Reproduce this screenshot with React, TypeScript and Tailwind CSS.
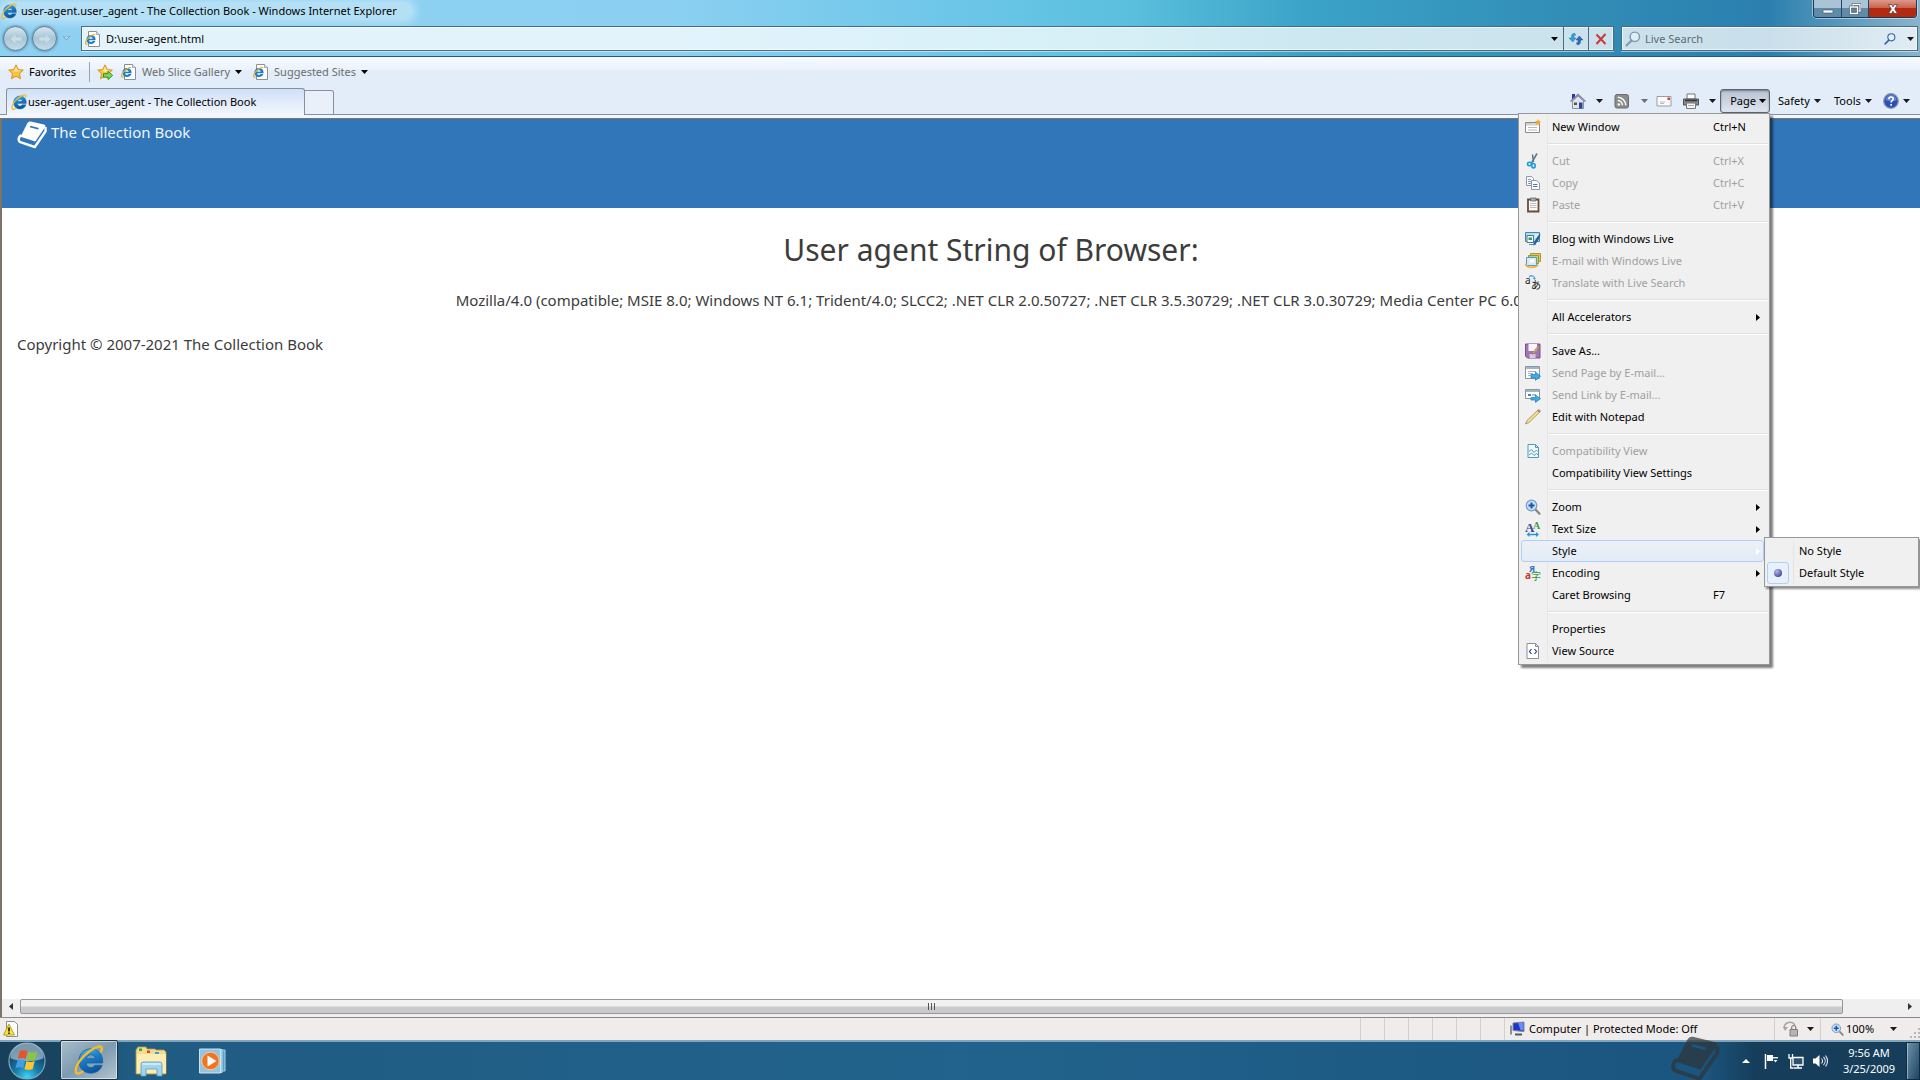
import type { ReactNode } from 'react';

function Caret({ className = 'fill-[#1a1a1a]' }: { className?: string }) {
  return (
    <svg viewBox="0 0 7 4" className={`h-1 w-[7px] shrink-0 ${className}`}>
      <path d="M0 0h7L3.5 4z" />
    </svg>
  );
}

function IeLogo({ className = 'size-4' }: { className?: string }) {
  return (
    <svg viewBox="0 0 16 16" className={`shrink-0 ${className}`}>
      <defs>
        <linearGradient id="ieBlue" x1="0" y1="0" x2="0.4" y2="1">
          <stop offset="0" stopColor="#4cb8ec" />
          <stop offset="0.55" stopColor="#1678c6" />
          <stop offset="1" stopColor="#0d569e" />
        </linearGradient>
      </defs>
      <path
        fill="url(#ieBlue)"
        stroke="#14609f"
        strokeWidth="0.4"
        d="M9 2C5.300 2 2.600 4.700 2.600 8.500S5.200 15 9 15c2.900 0 5.200-1.500 6-4.200h-4c-.4.800-1 1.200-2 1.200-1.500 0-2.400-.9-2.500-2.400h8.800C15.600 5.200 13 2 9 2zM6.600 7.300C6.800 6 7.700 5.200 9 5.200s2.200.8 2.300 2.100z"
      />
      <path
        fill="none"
        stroke="#f2bb2c"
        strokeWidth="1.3"
        strokeLinecap="round"
        d="M4.500 14.200C2.400 15.700.9 15.700.9 13.600.9 11 3.900 6.500 7.900 3.600c3.200-2.400 6.100-3.400 6.800-2.300.3.500.2 1.300-.3 2.200"
      />
    </svg>
  );
}

function IePage() {
  return (
    <svg viewBox="0 0 16 16" className="size-4 shrink-0">
      <path d="M3.500.5h8l3 3v12h-11z" fill="#fdfdfd" stroke="#8b8f96" />
      <path d="M11.500.5v3h3" fill="#e4e7ea" stroke="#8b8f96" strokeWidth="0.7" />
      <path
        fill="#1c7dc9"
        d="M6 3.900c-2.700 0-4.600 1.900-4.600 4.600s1.900 4.600 4.600 4.600c2.100 0 3.700-1.100 4.400-3H7.600c-.3.600-.8.900-1.600.9-1.100 0-1.800-.7-1.900-1.700h6.500C10.800 6.200 9 3.900 6 3.900zM4.200 7.700c.2-.9.800-1.400 1.800-1.400s1.500.5 1.600 1.400z"
      />
      <path
        fill="none"
        stroke="#eab02a"
        strokeWidth="1.100"
        d="M2.500 12.700c-1.200.8-2 .5-2-.5.100-1.800 2.200-4.900 4.900-6.900 2.200-1.600 4.400-2.300 4.900-1.500"
      />
    </svg>
  );
}

function Star({ add = false }: { add?: boolean }) {
  return (
    <svg viewBox="0 0 16 16" className="size-4 shrink-0">
      <path
        d="M8 .8l2.200 4.700 5.100.6-3.800 3.500 1 5.100L8 12.200l-4.500 2.500 1-5.100L.7 6.100l5.100-.6z"
        fill="#fcc23c"
        stroke="#d98a13"
        strokeWidth="0.9"
        strokeLinejoin="round"
      />
      <path d="M8 2.500L9.500 6l3.500.5-3 .8-2 1-3-1.500 1.500-.8z" fill="#fee9a0" />
      {add && (
        <path d="M6.500 9.700h4.500V7.300l4.700 4.100-4.700 4.100v-2.300H6.500z" fill="#7ed957" stroke="#2a8a22" strokeWidth="0.9" />
      )}
    </svg>
  );
}

function Magnifier({ className = 'size-4', ring = '#2a6db5' }: { className?: string; ring?: string }) {
  return (
    <svg viewBox="0 0 16 16" className={`shrink-0 ${className}`}>
      <path d="M6.500 9.500L1.500 14.500" stroke={ring} strokeWidth="2" strokeLinecap="round" />
      <circle cx="9.800" cy="5.800" r="4.700" fill="#e4f3fb" fillOpacity="0.7" stroke={ring} strokeWidth="1.4" />
    </svg>
  );
}

function ZoomIcon({ className = 'size-4' }: { className?: string }) {
  return (
    <svg viewBox="0 0 16 16" className={`shrink-0 ${className}`}>
      <path d="M10 10l4.500 4.700" stroke="#8d8577" strokeWidth="2.2" strokeLinecap="round" />
      <circle cx="6.500" cy="6.500" r="5.300" fill="#c5e2f8" stroke="#7a9cc0" strokeWidth="1.2" />
      <path d="M6.500 3.500v6M3.500 6.500h6" stroke="#1b53ae" strokeWidth="2" />
    </svg>
  );
}

function BookLogo({ className }: { className: string }) {
  return (
    <svg viewBox="0 0 30 28" className={`shrink-0 ${className}`}>
      <path
        fill="currentColor"
        fillRule="evenodd"
        d="M10.500 2Q11.500 0 13.700.5L27 3.600Q29.200 4.200 28 6.200L18.300 20.600 3.500 15.700zM13.500 4.800l-.9 1.500 8.400 2.200.9-1.500z"
      />
      <path
        fill="none"
        stroke="currentColor"
        strokeWidth="2.400"
        strokeLinejoin="round"
        d="M4.500 14.500C1.200 15.500.8 20 3.300 21.200L17.800 26 28.600 10.200 28.500 6"
      />
    </svg>
  );
}

/* Page menu icons */

const icons: Record<string, ReactNode> = {
  window: (
    <>
      <path d="M.5 3.500h14v10H.5z" fill="#fff" stroke="#8c8c8c" />
      <path d="M1 4h13v2.500H1z" fill="#d5d0c8" />
      <path d="M3 8.500h9M3 11h9" stroke="#b9b9b9" />
      <path d="M13 0l1 2 2 .2-1.500 1.500.5 2.300-2-1.200L11 6l.5-2.300L10 2.200l2-.2z" fill="#f7a823" />
    </>
  ),
  cut: (
    <>
      <path d="M12 .5L6.500 10M7.500 1.500L8.500 9" stroke="#5c7690" strokeWidth="1.500" />
      <ellipse cx="4.500" cy="11" rx="2" ry="1.700" fill="none" stroke="#1e9ce0" strokeWidth="1.600" />
      <ellipse cx="8.500" cy="12.700" rx="1.700" ry="2.200" fill="none" stroke="#1e9ce0" strokeWidth="1.600" />
    </>
  ),
  copy: (
    <g stroke="#8f98a8">
      <path d="M1.500 1.500h5l2 2v7h-7z" fill="#fff" />
      <path d="M3 4.500h3M3 6.500h4M3 8.500h3" stroke="#7d9ccb" />
      <path d="M6.500 5.500h5l3 2.500v6.500h-8z" fill="#fff" />
      <path d="M8 9.500h4.500M8 11.500h4.500" stroke="#5678b8" />
    </g>
  ),
  paste: (
    <>
      <path d="M3 2.500h10.500V14.500H3z" fill="#fdfdfb" stroke="#6a4b35" strokeWidth="1.800" />
      <path d="M5.500 1h5.500v3H5.500z" fill="#a9a9a9" stroke="#5d5d5d" strokeWidth="0.7" />
      <path d="M5 6.500h6.500M5 8.500h6.500M5 10.500h6.500" stroke="#b8bcc0" />
    </>
  ),
  blog: (
    <>
      <path d="M.5 1.500h14v9H.5z" fill="#b5dcef" stroke="#3f89ad" />
      <path d="M2 4.500h6.500v7H2z" fill="#f4fbff" stroke="#47799c" />
      <path d="M3.500 6.500h3.500v2.500H3.500z" fill="#3b9a4b" />
      <path d="M9.500 4h4M9.500 6h3" stroke="#fff" />
      <path d="M15.500 2.500c-.6 5-2.600 8-6 11.500l-1.500.5.300-1.800C10.500 9 12 5.500 15.500 2.500z" fill="#255d9e" />
      <path d="M4 13.500h7" stroke="#4b8db8" />
    </>
  ),
  email: (
    <>
      <path d="M5.500.5h10v8h-10z" fill="#f3c553" stroke="#b9912c" />
      <path d="M3.500 2.500h10v8h-10z" fill="#b8d66c" stroke="#7da03a" />
      <path d="M1.500 4.500h10v8h-10z" fill="#d5ebfa" stroke="#5c95c7" />
      <path d="M5 6.500h4v3H5z" fill="#fff" />
      <path d="M.5 11c1 4 8 4.500 13 1" fill="none" stroke="#f0b03a" strokeWidth="1.700" />
    </>
  ),
  translate: (
    <>
      <text x="0" y="9" fontSize="10" fill="#222">a</text>
      <text x="6" y="14" fontSize="10" fill="#111" fontFamily="Noto Sans CJK JP">あ</text>
      <path d="M4 2c2-2 5-1.500 5.500 1" fill="none" stroke="#59a7dc" strokeWidth="1.300" />
      <path d="M7.500 3h4l-2 2z" fill="#59a7dc" />
    </>
  ),
  save: (
    <>
      <path d="M.5 1h14.500v14H2.500l-2-2z" fill="#a074b8" stroke="#76508f" />
      <path d="M3.500 1h8.500v7H3.500z" fill="#fbf6fc" />
      <path d="M4.500 11h6v4h-6z" fill="#d8c7e2" />
      <path d="M14.500 3.500l-5.500 7-1.500 1 .3-2L13 3z" fill="#e9b85b" stroke="#8f6a36" strokeWidth="0.6" />
    </>
  ),
  sendPage: (
    <>
      <path d="M.5 1.500h14v12H.5z" fill="#fff" stroke="#8497a8" />
      <path d="M1 2h13v2H1z" fill="#a5b4c0" />
      <path d="M3 6.500h8M3 8.500h5M3 10.500h4" stroke="#a8b4be" />
      <path d="M6 9.500h4.500V7l5 4.200-5 4.200V13H6z" fill="#3fabe8" stroke="#1c79b7" strokeWidth="0.7" />
    </>
  ),
  sendLink: (
    <>
      <path d="M.5 2.500h14v9H.5z" fill="#fff" stroke="#8497a8" />
      <path d="M1 3h13v2H1z" fill="#a5b4c0" />
      <path d="M3 7h3v2H3z" fill="#4c80c0" />
      <path d="M7 8h4" stroke="#4c80c0" />
      <path d="M6 10.500h4.500V8l5 3.700-5 3.700V13H6z" fill="#3fabe8" stroke="#1c79b7" strokeWidth="0.7" />
    </>
  ),
  pencil: (
    <>
      <path d="M.5 15l1.500-3.500L12.500 1.500l2 1.700L4 13.500z" fill="#f2df8f" stroke="#9a8a50" strokeWidth="0.8" />
      <path d="M12.500 1.500L13.800.5l1.700 1.500-1 1.200z" fill="#b5a18a" stroke="#7d6a55" strokeWidth="0.6" />
    </>
  ),
  compat: (
    <>
      <path d="M3 1.500h7.500l3 3v10H3z" fill="#f2fafd" stroke="#4b9cbc" />
      <path d="M10.500 1.500v3h3" fill="none" stroke="#4b9cbc" />
      <path d="M4 8.500l2.500-2 2.500 3 2.500-2.500 1.500 1.500M4 12l2.500-2 2.500 2.500 2.500-2 1.500 1.500" fill="none" stroke="#4b9cbc" />
    </>
  ),
  textSize: (
    <>
      <text x="0" y="11" fontSize="13" fontFamily="Liberation Serif" fontWeight="700" fill="#37499b">A</text>
      <text x="8" y="8" fontSize="10" fontFamily="Liberation Serif" fontWeight="700" fill="#3d9a49">A</text>
      <path d="M3 13.500h9" stroke="#2697dc" strokeWidth="1.500" />
      <path d="M1.500 13.500l3-2.500v5zM14 13.500l-3-2.500v5z" fill="#2697dc" />
    </>
  ),
  encoding: (
    <>
      <text x="4" y="7" fontSize="9" fontWeight="700" fill="#3573c8">Я</text>
      <text x="0" y="14" fontSize="10" fontWeight="700" fill="#c33a2c">a</text>
      <text x="6" y="15" fontSize="10" fill="#2f9940" fontFamily="Noto Sans CJK JP">字</text>
    </>
  ),
  source: (
    <>
      <path d="M2 .5h8.500l3 3v12H2z" fill="#fff" stroke="#8b8f96" />
      <path d="M10.500.5v3h3" fill="none" stroke="#8b8f96" />
      <path d="M6.500 6L4.500 8.500l2 2.500M9.500 6l2 2.500-2 2.500" fill="none" stroke="#2b3f8f" strokeWidth="1.200" />
    </>
  ),
};

interface MenuEntry {
  label: string;
  icon?: string;
  shortcut?: string;
  disabled?: boolean;
  submenu?: boolean;
}

const menuGroups: MenuEntry[][] = [
  [{ label: 'New Window', icon: 'window', shortcut: 'Ctrl+N' }],
  [
    { label: 'Cut', icon: 'cut', shortcut: 'Ctrl+X', disabled: true },
    { label: 'Copy', icon: 'copy', shortcut: 'Ctrl+C', disabled: true },
    { label: 'Paste', icon: 'paste', shortcut: 'Ctrl+V', disabled: true },
  ],
  [
    { label: 'Blog with Windows Live', icon: 'blog' },
    { label: 'E-mail with Windows Live', icon: 'email', disabled: true },
    { label: 'Translate with Live Search', icon: 'translate', disabled: true },
  ],
  [{ label: 'All Accelerators', submenu: true }],
  [
    { label: 'Save As...', icon: 'save' },
    { label: 'Send Page by E-mail...', icon: 'sendPage', disabled: true },
    { label: 'Send Link by E-mail...', icon: 'sendLink', disabled: true },
    { label: 'Edit with Notepad', icon: 'pencil' },
  ],
  [
    { label: 'Compatibility View', icon: 'compat', disabled: true },
    { label: 'Compatibility View Settings' },
  ],
  [
    { label: 'Zoom', icon: 'zoom', submenu: true },
    { label: 'Text Size', icon: 'textSize', submenu: true },
    { label: 'Style', submenu: true },
    { label: 'Encoding', icon: 'encoding', submenu: true },
    { label: 'Caret Browsing', shortcut: 'F7' },
  ],
  [{ label: 'Properties' }, { label: 'View Source', icon: 'source' }],
];

function StyleSubmenu() {
  return (
    <div className="absolute -top-[3px] left-full z-20 w-[155px] border border-[#979797] bg-[#f0f0f0] p-0.5 shadow-[2px_2px_2px_rgba(0,0,0,0.45)]">
      <div className="bg-linear-to-r from-transparent from-[26px] via-[#d9d9d9] via-[26px] to-transparent to-[27px]">
        {['No Style', 'Default Style'].map((name) => (
          <label key={name} className="flex h-[22px] items-center gap-[10px]">
            <span className="flex size-[22px] items-center justify-center rounded-[3px] border border-transparent has-checked:border-[#aecff7] has-checked:bg-[#e8f0f9]">
              <input
                type="radio"
                name="style"
                defaultChecked={name === 'Default Style'}
                className="size-2 appearance-none rounded-full checked:bg-radial-[at_35%_30%] checked:from-[#b4b8ec] checked:to-[#26267c]"
              />
            </span>
            {name}
          </label>
        ))}
      </div>
    </div>
  );
}

function MenuRow({ item }: { item: MenuEntry }) {
  const open = item.label === 'Style';
  return (
    <div className="relative mr-1">
      <button
        role="menuitem"
        disabled={item.disabled}
        className={`flex h-[22px] w-full items-center rounded-[3px] border pl-[3px] text-left ${
          open ? 'border-[#aecff7] bg-linear-to-b from-[#edf1f7] to-[#e2ebf6]' : 'border-transparent'
        } ${item.disabled ? 'text-[#a0a0a0]' : 'text-black'}`}
      >
        <span className="mr-[11px] size-4">
          {item.icon === 'zoom' && <ZoomIcon />}
          {item.icon && item.icon !== 'zoom' && (
            <svg viewBox="0 0 16 16" className="size-4 overflow-visible">{icons[item.icon]}</svg>
          )}
        </span>
        <span className="flex-1 whitespace-nowrap">{item.label}</span>
        {item.shortcut && <span className="w-[50px]">{item.shortcut}</span>}
        {item.submenu && (
          <svg viewBox="0 0 4 7" className={`mr-[3px] h-[7px] w-1 ${open ? 'fill-white' : 'fill-black'}`}>
            <path d="M0 0v7l4-3.500z" />
          </svg>
        )}
      </button>
      {open && <StyleSubmenu />}
    </div>
  );
}

function PageMenu() {
  return (
    <div
      role="menu"
      className="absolute top-full right-0 z-10 w-[252px] border border-[#979797] bg-[#f0f0f0] p-0.5 pr-px text-left shadow-[3px_3px_2px_rgba(0,0,0,0.5)]"
    >
      <div className="bg-linear-to-r from-transparent from-[26px] via-[#dcdcdc] via-[26px] to-transparent to-[27px]">
        {menuGroups.map((group, i) => (
          <div key={i}>
            {i > 0 && <hr className="my-[5px] ml-[27px] h-0.5 border-t border-b border-t-[#e0e0e0] border-b-white" />}
            {group.map((item) => (
              <MenuRow key={item.label} item={item} />
            ))}
          </div>
        ))}
      </div>
    </div>
  );
}

function TitleBar() {
  return (
    <div className="flex h-[25px] items-start justify-between">
      <div className="mt-0.5 flex h-[18px] items-center gap-1 rounded-full bg-white/35 pr-4 pl-px shadow-[0_0_8px_4px_rgba(255,255,255,0.35)]">
        <IeLogo />
        <h1 className="whitespace-nowrap">user-agent.user_agent - The Collection Book - Windows Internet Explorer</h1>
      </div>
      <div className="mr-[3px] flex h-[18px] overflow-hidden rounded-b-[4px] border border-t-0 border-[#1c3a55] shadow-[0_0_0_1px_rgba(255,255,255,0.45)]">
        <button
          aria-label="Minimize"
          className="flex w-7 items-center justify-center border-r border-[#24455f] bg-linear-to-b from-[#a9c4d6] from-45% to-[#5f8ba9] to-50%"
        >
          <svg viewBox="0 0 12 12" className="size-3">
            <path d="M1 7h10v3H1z" fill="#fff" stroke="#4c5d6b" strokeWidth="0.7" />
          </svg>
        </button>
        <button
          aria-label="Restore"
          className="flex w-[27px] items-center justify-center border-r border-[#24455f] bg-linear-to-b from-[#a9c4d6] from-45% to-[#5f8ba9] to-50%"
        >
          <svg viewBox="0 0 12 12" className="size-3">
            <path d="M4 1.500h7v6.500H4z" fill="none" stroke="#37485a" strokeWidth="2.400" />
            <path d="M4 1.500h7v6.500H4z" fill="none" stroke="#fff" strokeWidth="1.300" />
            <path d="M1.500 4h7v6.500h-7z" fill="#6a7f92" stroke="#37485a" strokeWidth="2.400" />
            <path d="M1.500 4h7v6.500h-7z" fill="none" stroke="#fff" strokeWidth="1.500" />
          </svg>
        </button>
        <button
          aria-label="Close"
          className="flex w-[47px] items-center justify-center bg-linear-to-b from-[#dc9a8c] from-0% via-[#c8634f] via-45% to-[#b32a10] to-50%"
        >
          <svg viewBox="0 0 12 12" className="size-3">
            <path d="M1.500 1.500h3L6 3.800l1.500-2.300h3L7.700 6l2.800 4.500h-3L6 8.200l-1.500 2.300h-3L4.300 6z" fill="#fff" stroke="#5a3a3a" strokeWidth="0.8" />
          </svg>
        </button>
      </div>
    </div>
  );
}

function NavBar() {
  return (
    <div className="flex h-[31px] items-start pt-px pr-0.5 pl-[3px]">
      <div className="flex items-center gap-1">
        {['Back', 'Forward'].map((name) => (
          <button
            key={name}
            aria-label={name}
            className="flex size-[25px] items-center justify-center rounded-full border border-[#5d7b90] bg-linear-to-b from-[#d5e6ef] via-[#a9c6d6] to-[#c3dde8] shadow-[0_0_3px_rgba(40,70,100,0.7)]"
          >
            <svg viewBox="0 0 16 16" className={`size-4 ${name === 'Forward' ? 'rotate-180' : ''}`}>
              <path d="M2 8l6-5.500V6h6v4H8v3.500z" fill="#c9dde8" stroke="#a9c4d2" strokeWidth="0.6" />
            </svg>
          </button>
        ))}
      </div>
      <button aria-label="Recent pages" className="mt-2.5 ml-1.5 flex">
        <Caret className="fill-[#b9dcec] stroke-[#6f9fb8]" />
      </button>
      <div className="ml-[11px] flex h-[25px] flex-1 items-stretch border border-[#4a6c83] bg-white/75 shadow-[inset_0_0_0_1px_rgba(255,255,255,0.6),0_1px_0_rgba(255,255,255,0.5)]">
        <div className="flex flex-1 items-center gap-[5px] pl-[3px]">
          <IePage />
          <input aria-label="Address" defaultValue="D:\user-agent.html" className="min-w-0 flex-1 bg-transparent outline-none" />
          <button aria-label="Show address list" className="mr-[5px]">
            <Caret className="fill-black" />
          </button>
        </div>
        <button aria-label="Refresh" className="flex w-[25px] items-center justify-center border-l border-[#4a6c83]">
          <svg viewBox="0 0 16 16" className="size-4">
            <path d="M7 2.500C5 2 3.500 3 3.500 5.500V7H1l3.700 4L8 7H6V5.500C6 4.500 6.500 4 7.500 4.300z" fill="#3d9bd3" stroke="#2375ad" strokeWidth="0.5" />
            <path d="M9 13.500c2 .5 3.500-.5 3.500-3V9H15l-3.700-4L8 9h2v1.500c0 1-.5 1.500-1.500 1.200z" fill="#2f6cc0" stroke="#1d4c95" strokeWidth="0.5" />
          </svg>
        </button>
        <button aria-label="Stop" className="flex w-[25px] items-center justify-center border-l border-[#4a6c83]">
          <svg viewBox="0 0 12 12" className="size-3">
            <path d="M1.500 1.500l9 9.500M10.500 1L1.500 11" stroke="#c9383b" strokeWidth="2" />
          </svg>
        </button>
      </div>
      <div className="ml-[7px] flex h-[25px] w-[297px] items-center border border-[#4a6c83] bg-white/75 pr-[3px] pl-[3px] shadow-[inset_0_0_0_1px_rgba(255,255,255,0.6),0_1px_0_rgba(255,255,255,0.5)]">
        <Magnifier ring="#7f97a8" />
        <input
          type="search"
          aria-label="Live Search"
          placeholder="Live Search"
          className="ml-1 min-w-0 flex-1 bg-transparent outline-none placeholder:text-[#5c6a72]"
        />
        <button aria-label="Search">
          <Magnifier className="size-3" ring="#2a63a8" />
        </button>
        <button aria-label="Search options" className="ml-[11px]">
          <Caret />
        </button>
      </div>
    </div>
  );
}

function FavoritesBar() {
  return (
    <div className="flex h-[30px] items-center pl-2">
      <button className="flex items-center gap-[5px]">
        <Star />
        Favorites
      </button>
      <div className="mr-[7px] ml-[13px] h-5 w-px bg-[#9aa3b0]" />
      <button aria-label="Add to Favorites Bar">
        <Star add />
      </button>
      <button className="ml-2 flex items-center text-[#6d6d6d]">
        <IePage />
        <span className="mr-[5px] ml-[5px]">Web Slice Gallery</span>
        <Caret className="fill-black" />
      </button>
      <button className="ml-[11px] flex items-center text-[#6d6d6d]">
        <IePage />
        <span className="mr-[5px] ml-[5px]">Suggested Sites</span>
        <Caret className="fill-black" />
      </button>
    </div>
  );
}

function CommandBar() {
  return (
    <div className="flex items-center self-start pt-0.5">
      <button aria-label="Home">
        <svg viewBox="0 0 16 16" className="size-4">
          <path d="M2 1h3v5H2z" fill="#2a35b0" />
          <path d="M2.500 8L8 3l5.500 5v7.500h-11z" fill="#e3e3ea" stroke="#777b8c" strokeWidth="0.8" />
          <path d="M.5 8.500L8 1.500l7.500 7" fill="none" stroke="#7d84a8" strokeWidth="1.500" />
          <path d="M9 9.500h3.500v6H9z" fill="#27459b" />
          <path d="M4 9.500h3v2.500H4z" fill="#4d5468" />
        </svg>
      </button>
      <button aria-label="Home options" className="ml-2.5"><Caret /></button>
      <button aria-label="Feeds" className="ml-[11px]">
        <svg viewBox="0 0 16 16" className="size-4">
          <rect x="1" y="1.500" width="13.500" height="13.500" rx="2" fill="#8b8b8b" stroke="#6b6b6b" />
          <circle cx="4.800" cy="11.500" r="1.300" fill="#fff" />
          <path d="M3.800 7.500a5 5 0 0 1 4.700 4.800M3.800 4.200a8.300 8.300 0 0 1 8 8.100" fill="none" stroke="#fff" strokeWidth="1.500" />
        </svg>
      </button>
      <button aria-label="Feed options" className="ml-[11px]"><Caret className="fill-[#6d6d6d]" /></button>
      <button aria-label="Read mail" className="ml-2">
        <svg viewBox="0 0 16 16" className="size-4">
          <path d="M1 3.500h14v9.500H1z" fill="#fafafa" stroke="#9c9c9c" />
          <path d="M11.500 4.500h2.500V7h-2.500z" fill="#cc3a32" />
          <path d="M4 9h5M4 10.500h4" stroke="#bdbdbd" />
        </svg>
      </button>
      <button aria-label="Print" className="ml-[11px]">
        <svg viewBox="0 0 16 16" className="size-4">
          <path d="M4 1h8v5H4z" fill="#fff" stroke="#777" />
          <path d="M.5 6h15v6H.5z" fill="#86898c" stroke="#4e5255" />
          <path d="M2 7.500h12" stroke="#35383a" strokeWidth="1.500" />
          <path d="M3.500 10h9v5.500h-9z" fill="#f4f4f4" stroke="#777" />
          <path d="M5 12.500h6" stroke="#aaa" />
        </svg>
      </button>
      <button aria-label="Print options" className="ml-2.5"><Caret /></button>
      <div className="relative ml-1">
        <button
          aria-haspopup="menu"
          aria-expanded="true"
          className="flex h-6 w-[50px] items-center justify-end gap-[3px] rounded-[3px] border border-[#5b6470] bg-linear-to-b from-[#b9c2d2] to-[#dfe5f0] pr-[3px] shadow-[inset_0_1px_2px_rgba(60,70,90,0.6)]"
        >
          Page
          <Caret className="fill-black" />
        </button>
        <PageMenu />
      </div>
      <button className="ml-2 flex w-14 items-center gap-1">
        Safety <Caret />
      </button>
      <button className="flex w-[49px] items-center gap-1">
        Tools <Caret />
      </button>
      <button aria-label="Help" className="flex items-center gap-1">
        <svg viewBox="0 0 16 16" className="size-4">
          <circle cx="8" cy="8" r="7.300" fill="#2c4fb5" stroke="#8b95ab" strokeWidth="1.300" />
          <path d="M2.500 7a5.500 5 0 0 1 11 0c-3 1.500-8 1.500-11 0z" fill="#86a3e6" fillOpacity="0.6" />
          <path d="M5.800 6.300c0-3 4.500-3 4.500-.3 0 1.700-2.200 1.700-2.200 3.500M8.100 11v1.700" fill="none" stroke="#fff" strokeWidth="1.600" />
        </svg>
        <Caret />
      </button>
    </div>
  );
}

function TabRow() {
  return (
    <div className="flex h-7 items-end justify-between border-b border-[#8591a2] pr-2.5 pl-1.5">
      <div className="-mb-px flex items-end">
        <div className="flex h-[27px] w-[299px] items-center rounded-t-[3px] border border-b-0 border-[#8591a2] bg-linear-to-b from-[#cfe0f7] to-[#f3f7fd] pl-1">
          <IeLogo />
          <span className="ml-px whitespace-nowrap">user-agent.user_agent - The Collection Book</span>
        </div>
        <button aria-label="New Tab" className="h-[25px] w-[29px] rounded-tr-[3px] border border-l-0 border-[#8591a2] bg-[#e9f0fa]" />
      </div>
      <CommandBar />
    </div>
  );
}

function WebPage() {
  return (
    <main className="flex-1 overflow-hidden border-t border-l-2 border-[#7c7468] bg-white text-[15px] text-[#3c3c3c]">
      {/* the document is a little wider than the window */}
      <div className="w-[calc(100%+60px)]">
        <header className="flex h-[89px] bg-[#3076b9] pl-[15px] text-[#eef4fa]">
          <BookLogo className="mt-0.5 h-7 w-[30px] text-white" />
          <span className="mt-px ml-1 leading-6">The Collection Book</span>
        </header>
        <h2 className="mt-6 text-center text-[30px] leading-9">User agent String of Browser:</h2>
        <p className="mt-5 text-center leading-6 whitespace-nowrap">
          Mozilla/4.0 (compatible; MSIE 8.0; Windows NT 6.1; Trident/4.0; SLCC2; .NET CLR 2.0.50727; .NET CLR 3.5.30729;
          .NET CLR 3.0.30729; Media Center PC 6.0)
        </p>
        <footer className="mt-5 pl-[15px] leading-6">Copyright © 2007-2021 The Collection Book</footer>
      </div>
    </main>
  );
}

function HorizontalScrollbar() {
  return (
    <div className="flex h-[18px] items-center border-l-2 border-[#7c7468] bg-[#efefef] pb-[3px]">
      <button aria-label="Scroll left" className="flex w-[18px] justify-center">
        <svg viewBox="0 0 4 7" className="h-[7px] w-1 fill-[#333]"><path d="M4 0v7L0 3.500z" /></svg>
      </button>
      <div className="flex-1">
        <div className="flex h-[15px] w-[97%] items-center justify-center gap-[2px] rounded-[2px] border border-[#979797] bg-linear-to-b from-[#f1f1f1] from-45% to-[#c9cacc] to-55%">
          <span className="h-[7px] w-px bg-[#555]" />
          <span className="h-[7px] w-px bg-[#555]" />
          <span className="h-[7px] w-px bg-[#555]" />
        </div>
      </div>
      <button aria-label="Scroll right" className="flex w-[21px] justify-center">
        <svg viewBox="0 0 4 7" className="h-[7px] w-1 fill-[#333]"><path d="M0 0v7l4-3.500z" /></svg>
      </button>
    </div>
  );
}

function StatusBar() {
  return (
    <footer className="flex h-[23px] items-stretch border-t border-[#8a8a8a] bg-[#f0eceb] text-black">
      <div className="flex flex-1 items-center pl-[3px]">
        <svg viewBox="0 0 16 16" className="size-4">
          <path d="M3.500.5h8l3 3v12h-11z" fill="#fdfdfd" stroke="#8b8f96" />
          <path d="M6 3L11.500 14H.5z" fill="#f8e23c" stroke="#b29a14" strokeWidth="0.9" strokeLinejoin="round" />
          <path d="M6 6.500v4M6 11.500v1.500" stroke="#111" strokeWidth="1.500" />
        </svg>
      </div>
      {[0, 1, 2, 3, 4, 5].map((n) => (
        <div key={n} className="w-6 border-l border-[#d3cfce]" />
      ))}
      <div className="flex w-[270px] items-center gap-1 border-l border-[#d3cfce] pl-1">
        <svg viewBox="0 0 16 16" className="size-4">
          <path d="M4 2l11-1v9.500l-11-1z" fill="#1d36c8" stroke="#7f8899" />
          <path d="M9 1.800l5.500-.4v8l-3-.3z" fill="#6f8bf2" />
          <path d="M1 4.500h2v9H1z" fill="#8a8f98" />
          <path d="M6 12.500h7v2H6z" fill="#555b66" />
        </svg>
        <span className="whitespace-nowrap">Computer | Protected Mode: Off</span>
      </div>
      <button aria-label="InPrivate Filtering" className="flex w-[46px] items-center gap-2 border-l border-[#d3cfce] pl-2">
        <svg viewBox="0 0 16 16" className="size-4">
          <path d="M1 7a6 6 0 0 1 11-3" fill="none" stroke="#a5a5a5" strokeWidth="1.500" />
          <path d="M0 6h5L2 10z" fill="#a5a5a5" />
          <path d="M7 8.500h7.500v6.500H7z" fill="#b5b5b5" stroke="#7d7d7d" />
          <path d="M8.700 8V6.500a2 2 0 0 1 4 0V8" fill="none" stroke="#7d7d7d" strokeWidth="1.200" />
        </svg>
        <Caret />
      </button>
      <button className="flex w-[100px] items-center border-l border-[#d3cfce] pl-2.5">
        <ZoomIcon className="size-[13px]" />
        <span className="ml-0.5 w-11 text-left">100%</span>
        <Caret />
        <svg viewBox="0 0 10 10" className="mt-2 ml-auto size-2.5 fill-[#b9b5b3]">
          <path d="M8 0h2v2H8zM8 4h2v2H8zM4 4h2v2H4zM8 8h2v2H8zM4 8h2v2H4zM0 8h2v2H0z" />
        </svg>
      </button>
    </footer>
  );
}

function Taskbar() {
  return (
    <div className="relative flex h-10 items-stretch border-t-2 border-t-[#7fa6bd] bg-[linear-gradient(to_right,#183f5a_0px,#19445f_56px,#205b82_130px,#21638c_50%,#1b5680_85%)] text-white">
      <button aria-label="Start" className="flex w-[60px] items-center pl-2">
        <svg viewBox="0 0 40 40" className="size-[38px]">
          <defs>
            <radialGradient id="orb" cx="0.5" cy="0.95" r="0.8">
              <stop offset="0" stopColor="#3fd6f5" />
              <stop offset="0.45" stopColor="#1779a8" />
              <stop offset="1" stopColor="#123c5c" />
            </radialGradient>
          </defs>
          <circle cx="20" cy="20" r="19" fill="url(#orb)" stroke="#7fa9c0" strokeWidth="1.200" />
          <path d="M2.500 17a17.500 16 0 0 1 35 0c-9 4-25 4-35 0z" fill="#d3e3ec" fillOpacity="0.55" />
          <path d="M12.500 9.500c3-1.500 5.500-1 8 .3l-2 8.200c-2.500-1.300-5-1.500-8.200-.2z" fill="#e8542a" />
          <path d="M21.700 10.300c3 1.400 5.500 1.400 9-.1l-2.200 8.400c-3 1.300-5.500 1.300-8.700-.1z" fill="#8cc540" />
          <path d="M10 19.200c3-1.300 5.500-1 8.200.2l-2.100 8.300c-2.600-1.400-5.200-1.500-8.300-.2z" fill="#3f9fe0" />
          <path d="M19.400 20c3 1.300 5.600 1.300 8.800 0l-2.200 8.400c-3.100 1.300-5.700 1.200-8.700-.1z" fill="#fbc62f" />
        </svg>
      </button>
      <button
        aria-label="Internet Explorer"
        className="-mt-0.5 flex w-[58px] items-center justify-center rounded-[2px] border border-[#16344a] bg-linear-to-br from-[#a9bdca] via-[#7d9bb0] to-[#b3c4cf] shadow-[inset_0_0_0_1px_rgba(255,255,255,0.55)]"
      >
        <IeLogo className="size-[30px]" />
      </button>
      <button aria-label="Windows Explorer" className="ml-[17px]">
        <svg viewBox="0 0 32 32" className="size-8">
          <path d="M1 5l2-3h8l1 2h8l1 1h8l2 2v22H1z" fill="#f3dc8b" stroke="#b99a45" strokeWidth="0.8" />
          <path d="M4 3.500h3V6H4z" fill="#32a852" />
          <path d="M12 5.500h3V8h-3z" fill="#d9482b" />
          <path d="M20 7h4v2h-4z" fill="#38a0d8" />
          <path d="M2 9h29v19H2z" fill="#fbeeb4" />
          <path d="M6 31V19q0-2 2-2h17q2 0 2 2v12h-5v-7H11v7z" fill="#9fd3ee" stroke="#5c9cc2" strokeWidth="0.8" />
          <path d="M7 19h19" stroke="#dcf1fb" strokeWidth="1.500" />
        </svg>
      </button>
      <button aria-label="Windows Media Player" className="ml-8">
        <svg viewBox="0 0 28 28" className="size-7">
          <path d="M6 3h20v21H6z" fill="#5a9fc8" stroke="#a8d3ea" />
          <path d="M3 2.500h20v23H3z" fill="#7cb9da" stroke="#b8def0" />
          <path d="M.5 2h21v24H.5z" fill="#94c5e0" stroke="#c9e5f3" />
          <circle cx="11.500" cy="14" r="8.800" fill="#f07522" stroke="#fbc9a0" />
          <path d="M8.500 8.500v11l9-5.500z" fill="#fff" />
        </svg>
      </button>
      <div className="ml-auto flex items-center bg-linear-to-r from-transparent to-[#163d5a] to-25% pl-10">
        <button aria-label="Show hidden icons">
          <svg viewBox="0 0 8 4" className="h-1 w-2 fill-white"><path d="M0 4h8L4 0z" /></svg>
        </button>
        <svg viewBox="0 0 16 16" className="ml-3.5 size-4">
          <path d="M1.500 1v15" stroke="#fff" strokeWidth="1.500" />
          <path d="M3 2h6v6H3z" fill="#fff" />
          <path d="M9 4h5v1.500H9zM9.500 7h4l-2 2.500z" fill="#e4ecf2" />
        </svg>
        <svg viewBox="0 0 16 16" className="ml-2 size-4">
          <path d="M5 4.500h10v7.500H5z" fill="#2b5270" stroke="#fff" strokeWidth="1.300" />
          <path d="M10 12v2.500M6 15h8" stroke="#fff" strokeWidth="1.500" />
          <path d="M1 1v4h3.500V1M2.700 5v10h3" fill="none" stroke="#fff" strokeWidth="1.300" />
        </svg>
        <svg viewBox="0 0 16 16" className="ml-2 size-4">
          <path d="M1 5.500h2.500L7.500 2v12L3.500 10.500H1z" fill="#fff" />
          <path d="M9.500 5.500c1.300 1.500 1.300 3.500 0 5M11.500 3.800c2.200 2.500 2.200 6 0 8.400M13.500 2.500c2.600 3.500 2.600 7.500 0 11" fill="none" stroke="#dbe6ee" strokeWidth="1.100" />
        </svg>
        <div className="w-[78px] pl-1 text-center leading-4">
          <div>9:56 AM</div>
          <div>3/25/2009</div>
        </div>
        <button
          aria-label="Show desktop"
          className="h-full w-3.5 border border-[#0f2c42] bg-linear-to-br from-[#6f93ab] to-[#1c4665] shadow-[inset_1px_0_0_rgba(255,255,255,0.4)]"
        />
      </div>
      <BookLogo className="absolute -top-1.5 right-[200px] h-[46px] w-[50px] text-[#303438] opacity-70" />
    </div>
  );
}

export default function App() {
  return (
    <div className="flex h-screen min-w-[1000px] flex-col overflow-hidden bg-[#e2edf9] font-['Noto_Sans','Noto_Sans_CJK_JP',sans-serif] text-[11px] leading-4 text-black">
      <div className="border-b border-[#2a5874] bg-[linear-gradient(to_right,#8ed0f2_0%,#8bd0f2_35%,#6cc6e8_50%,#5abfdd_59%,#3ba3c8_68%,#3390b8_80%,#2a7fae_92%,#8ab4cc_100%)]">
        <TitleBar />
        <NavBar />
      </div>
      <div className="bg-linear-to-b from-[#f8faff] from-0% via-[#ecf3fd] via-20% to-[#e2edf9] to-25%">
        <FavoritesBar />
        <TabRow />
      </div>
      <div className="h-[3px] bg-[#f3f7fd]" />
      <WebPage />
      <HorizontalScrollbar />
      <StatusBar />
      <Taskbar />
    </div>
  );
}
